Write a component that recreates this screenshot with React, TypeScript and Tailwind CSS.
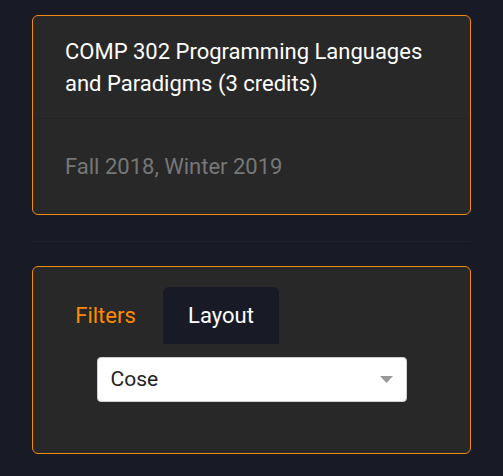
import React from "react";

export default function App() {
  return (
    <div className="min-h-screen w-full bg-[#181b25] px-8 pt-[15px] pb-6" style={{ fontFamily: "Roboto, 'Liberation Sans', sans-serif" }}>
      <div className="rounded-md border border-[#f08a10] bg-[#282828]">
        <div className="border-b border-[#242424] pl-8 pr-6 pt-5 pb-[18px] text-[22px] leading-8 text-white">
          COMP 302 Programming Languages and Paradigms (3 credits)
        </div>
        <div className="pl-8 pt-8 pb-[31px] text-[22px] leading-8 text-[#777777]">
          Fall 2018, Winter 2019
        </div>
      </div>
      <div className="mt-[26px] h-px w-full bg-[#1f222c]" />
      <div className="mt-6 rounded-md border border-[#f08a10] bg-[#282828] pt-5 pb-[51px]">
        <div className="flex pl-[18px]">
          <div className="h-[57px] w-[109px] flex items-center justify-center text-[22px] text-[#ff8a00]">Filters</div>
          <div className="ml-[3px] h-[57px] w-[116px] flex items-center justify-center rounded-t-md bg-[#181b25] text-[22px] text-white">Layout</div>
        </div>
        <div className="mt-[13px] flex justify-center">
          <div className="flex h-[45px] w-[310px] items-center justify-between rounded border border-[#cfcfcf] bg-white pl-[13px] pr-[13px]">
            <span className="text-[21px] text-[#222]">Cose</span>
            <svg width="13" height="7" viewBox="0 0 13 7"><path d="M0 0 L13 0 L6.5 7 Z" fill="#999" /></svg>
          </div>
        </div>
      </div>
    </div>
  );
}
